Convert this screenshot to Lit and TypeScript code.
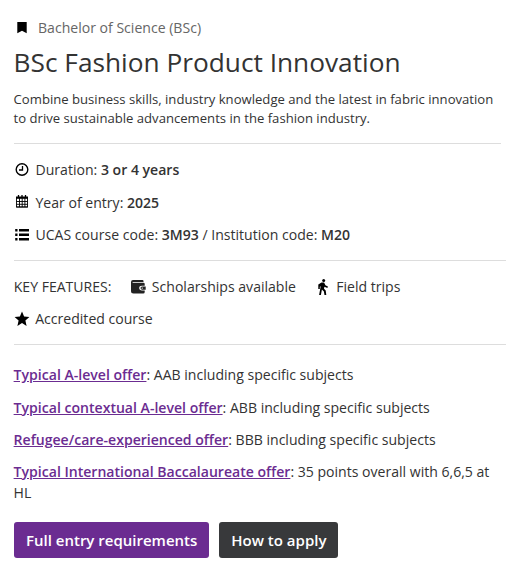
import { LitElement, html, css, svg } from "lit";
import { customElement } from "lit/decorators.js";

const bookmark = svg`<path d="M3.300 2h9.400v11.200L8 10.700l-4.700 2.500z"/>`;
const clock = svg`<circle cx="8" cy="7.500" r="5.800" fill="none" stroke="currentColor" stroke-width="1.400"/><path d="M8.500 4v4H5" fill="none" stroke="currentColor" stroke-width="1.300"/>`;
const calendar = svg`<path d="M4.500 1v3M8 1v3M11.500 1v3" fill="none" stroke="currentColor" stroke-width="1.300"/><path d="M2 2.500h12v2.300H2z"/><path d="M2.500 3v10h11V3M2.500 7.500h11M2.500 10.300h11M2 13h12M5.500 4v9M8.200 4v9M10.900 4v9" fill="none" stroke="currentColor" stroke-width=".9"/>`;
const list = svg`<path d="M1.200 2h2.300v2.500H1.200zM5 2h10v2.500H5zM1.200 6.500h2.300V9H1.200zM5 6.500h10V9H5zM1.200 11h2.300v2.500H1.200zM5 11h10v2.500H5z"/>`;
const wallet = svg`<path fill="#222" d="M3 1h9.500q1 0 1 1v1H3q-.6 0-.6.400t.6.400h10.500q1.200 0 1.200 1.200v1.700H12Q9.200 6.700 9.200 9.100T12 11.500h2.700V13q0 1.500-1.500 1.500H3.500Q1 14.500 1 12V3q0-2 2-2z"/><path fill="#222" fill-rule="evenodd" d="M12.200 7.400h3.500v3.400h-3.500a1.700 1.700 0 0 1 0-3.400zm0 1a.7.7 0 0 0 0 1.400.7.7 0 0 0 0-1.400z"/>`;
const walk = svg`<circle cx="8.700" cy="1.400" r="1.500"/><path d="M6.500 3.600h2.600l1.300 2.700 2.500 1.200-.5 1.400-3-1.200-.4 2 1.700 1.800.6 4.500H9.500l-.6-3.500-2-2L5.900 16H4.100L5.700 7.200l-.9.5v2.200H3.300V5.500z"/>`;
const star = svg`<path d="M8 .6l2.100 4.900 5.300.5-4 3.600 1.200 5.300L8 12.100l-4.600 2.800 1.200-5.300L.6 6l5.300-.5z"/>`;

@customElement("app-root")
export class AppRoot extends LitElement {
  static styles = css`
    :host { display: block; box-sizing: border-box; width: 515px; height: 581px; padding: 17px 9px 0 14px; overflow: hidden; background: #fff; color: #333; font: 14.070px/21px "Open Sans", sans-serif; }
    svg { width: 16px; height: 16px; fill: currentColor; color: #000; flex: none; overflow: visible; }
    .line { display: flex; align-items: center; height: 21px; gap: 5.500px; }
    .type { gap: 8px; color: #666; }
    h1 { font-size: 26.250px; line-height: 36px; font-weight: 400; margin: 6px 0 10px -.4px; }
    p { margin: 0; }
    .intro { font-size: 13.110px; line-height: 19px; white-space: nowrap; margin-left: -.4px; }
    hr { border: 0; border-top: 1px solid #ddd; margin: 0; }
    .first { width: 487px; margin: 15px 0 15px; }
    .facts { display: grid; gap: 11.500px; }
    .features { display: flex; flex-wrap: wrap; gap: 11px 18.800px; padding: 15px 0; margin-left: -.3px; }
    b { font-weight: 600; }
    .second { margin-top: 15px; }
    .offers { display: grid; gap: 11.200px; padding-top: 19.400px; margin-left: -.4px; }
    a { color: #6b2c91; font-weight: 600; text-decoration: underline; }
    .actions { display: flex; gap: 10px; margin-top: 19px; }
    button { height: 36px; border: 0; border-radius: 3px; padding: 1px 12px 0; color: #fff; font: 600 15px/21px "Open Sans", sans-serif; background: #6b2c91; }
    .dark { background: #38393b; }
  `;
  icon(body: unknown) { return html`<svg viewBox="0 0 16 16">${body}</svg>`; }
  render() {
    return html`
      <div class="line type">${this.icon(bookmark)}<span>Bachelor of Science (BSc)</span></div>
      <h1>BSc Fashion Product Innovation</h1>
      <p class="intro">Combine business skills, industry knowledge and the latest in fabric innovation<br>to drive sustainable advancements in the fashion industry.</p>
      <hr class="first">
      <div class="facts">
        <div class="line">${this.icon(clock)}<span>Duration: <b>3 or 4 years</b></span></div>
        <div class="line">${this.icon(calendar)}<span>Year of entry: <b>2025</b></span></div>
        <div class="line">${this.icon(list)}<span>UCAS course code: <b>3M93</b> / Institution code: <b>M20</b></span></div>
      </div>
      <hr class="second">
      <div class="features">
        <span>KEY FEATURES:</span>
        <div class="line">${this.icon(wallet)}<span>Scholarships available</span></div>
        <div class="line">${this.icon(walk)}<span>Field trips</span></div>
        <div class="line">${this.icon(star)}<span>Accredited course</span></div>
      </div>
      <hr>
      <div class="offers">
        <p><a>Typical A-level offer</a>: AAB including specific subjects</p>
        <p><a>Typical contextual A-level offer</a>: ABB including specific subjects</p>
        <p><a>Refugee/care-experienced offer</a>: BBB including specific subjects</p>
        <p><a>Typical International Baccalaureate offer</a>: 35 points overall with 6,6,5 at HL</p>
      </div>
      <div class="actions"><button>Full entry requirements</button><button class="dark">How to apply</button></div>
    `;
  }
}
